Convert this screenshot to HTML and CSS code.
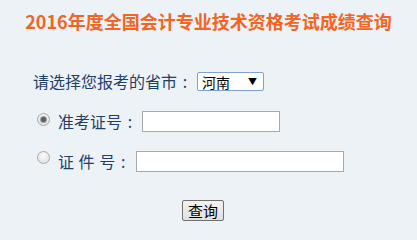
FILE: index.html
```html
<!DOCTYPE html>
<html lang="zh-CN">
<head>
<meta charset="utf-8">
<title>2016年度全国会计专业技术资格考试成绩查询</title>
<link rel="stylesheet" href="styles.css">
</head>
<body>
<div class="page">
  <h1 class="title">2016年度全国会计专业技术资格考试成绩查询</h1>
  <form class="form">
    <div class="row row-province">
      <label class="label">请选择您报考的省市<span class="colon">:</span></label>
      <div class="select"><span class="select-value">河南</span><span class="select-arrow">▼</span></div>
    </div>
    <div class="row row-zkz">
      <input class="radio radio-zkz" type="radio" name="t" checked>
      <label class="label">准考证号<span class="colon">:</span></label>
      <input class="text-input input-zkz" type="text">
    </div>
    <div class="row row-zj">
      <input class="radio radio-zj" type="radio" name="t">
      <label class="label label-spaced">证 件 号<span class="colon">:</span></label>
      <input class="text-input input-zj" type="text">
    </div>
    <div class="actions">
      <button class="btn" type="button">查询</button>
    </div>
  </form>
</div>
</body>
</html>
```
FILE: styles.css
```css
* { box-sizing: border-box; }
html, body { margin: 0; padding: 0; }
body {
  background: #edf2f6;
  font-family: "Noto Sans CJK SC", "Noto Sans", sans-serif;
  width: 417px;
  height: 236px;
  overflow: hidden;
}
.page { padding-top: 9px; }
.title {
  margin: 0;
  font-size: 18px;
  line-height: 24px;
  font-weight: bold;
  color: #f26524;
  text-align: center;
}
.form {
  display: flex;
  flex-direction: column;
  margin: 0;
  padding-top: 39px;
}
.row {
  display: flex;
  align-items: center;
  height: 21px;
}
.row-province { padding-left: 33px; height: 19px; }
.row-zkz { margin-top: 20px; padding-left: 37px; }
.row-zj { margin-top: 19px; padding-left: 37px; }
.label {
  font-size: 16px;
  line-height: 19px;
  color: #1d3f69;
  white-space: pre;
}
.colon {
  display: inline-block;
  width: 16px;
  text-align: center;
}
.label-spaced { word-spacing: 1px; }
.select {
  margin-left: 4px;
  width: 67px;
  height: 19px;
  border: 1px solid #7f9fd6;
  border-radius: 2px;
  background: #fff;
  display: flex;
  align-items: center;
  justify-content: space-between;
  padding: 0 6px 0 4px;
  font-size: 14px;
  color: #000;
}
.select-arrow { font-size: 9px; line-height: 1; }
.radio {
  -webkit-appearance: none;
  appearance: none;
  margin: 0 8px 0 0;
  width: 13px;
  height: 13px;
  flex: none;
  border-radius: 50%;
  border: 1px solid #a8a8a8;
  background: radial-gradient(circle at 50% 35%, #fbfbfb 0%, #dcdcdc 100%);
  display: flex;
  align-items: center;
  justify-content: center;
}
.radio:checked::after {
  content: "";
  width: 5px;
  height: 5px;
  border-radius: 50%;
  background: #5e5e5e;
  box-shadow: 0 0 0 1px #a0a0a0;
}
.radio-zkz { margin-bottom: 4px; }
.radio-zj { margin-bottom: 8px; }
.text-input {
  margin: 0 0 0 4px;
  height: 21px;
  border: 1px solid #a9a9a9;
  background: #fff;
  padding: 0 2px;
  outline: none;
}
.input-zkz { width: 138px; }
.input-zj { width: 208px; margin-left: 5px; }
.actions {
  display: flex;
  padding-left: 182px;
  margin-top: 28px;
}
.btn {
  width: 42px;
  height: 21px;
  padding: 0;
  border: 1px solid #707070;
  border-radius: 2px;
  background: linear-gradient(#f2f2f2, #e0e0e0);
  font-family: "Noto Sans CJK SC", sans-serif;
  font-size: 15px;
  line-height: 19px;
  color: #000;
}
```
